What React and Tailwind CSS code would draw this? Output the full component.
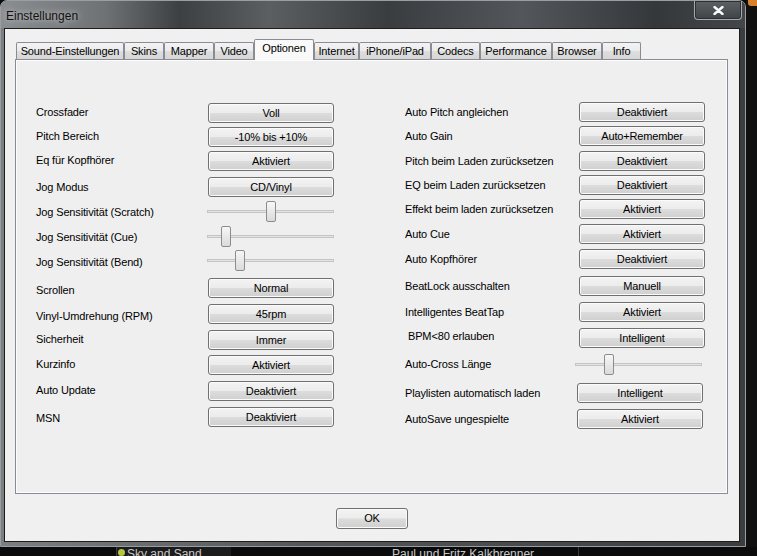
import React from "react";

const tabs = [
  { name: "Sound-Einstellungen", w: "w-[108px]" },
  { name: "Skins", w: "w-[40px]" },
  { name: "Mapper", w: "w-[50px]" },
  { name: "Video", w: "w-[40px]" },
  { name: "Optionen", w: "w-[60px]", active: true },
  { name: "Internet", w: "w-[45px]" },
  { name: "iPhone/iPad", w: "w-[72px]" },
  { name: "Codecs", w: "w-[49px]" },
  { name: "Performance", w: "w-[72px]" },
  { name: "Browser", w: "w-[50px]" },
  { name: "Info", w: "w-[39px]" },
];

const leftRows = [
  { label: "Crossfader", value: "Voll", mt: "mt-[43px]", nudge: "-translate-y-[1px]" },
  { label: "Pitch Bereich", value: "-10% bis +10%", mt: "mt-[4px]", nudge: "-translate-y-[1px]" },
  { label: "Eq für Kopfhörer", value: "Aktiviert", mt: "mt-[4px]", nudge: "-translate-y-[1px]" },
  { label: "Jog Modus", value: "CD/Vinyl", mt: "mt-[6px]", nudge: "" },
  { label: "Jog Sensitivität (Scratch)", slider: 59, mt: "mt-[4px]", nudge: "translate-y-[1px]" },
  { label: "Jog Sensitivität (Cue)", slider: 14, mt: "mt-[4px]", nudge: "translate-y-[1px]" },
  { label: "Jog Sensitivität (Bend)", slider: 28, mt: "mt-[3px]", nudge: "translate-y-[2px]" },
  { label: "Scrollen", value: "Normal", mt: "mt-[7px]", nudge: "translate-y-[2px]" },
  { label: "Vinyl-Umdrehung (RPM)", value: "45rpm", mt: "mt-[6px]", nudge: "translate-y-[2px]" },
  { label: "Sicherheit", value: "Immer", mt: "mt-[6px]", nudge: "-translate-y-[1px]" },
  { label: "Kurzinfo", value: "Aktiviert", mt: "mt-[5px]", nudge: "-translate-y-[1px]" },
  { label: "Auto Update", value: "Deaktiviert", mt: "mt-[6px]", nudge: "-translate-y-[1px]" },
  { label: "MSN", value: "Deaktiviert", mt: "mt-[6px]", nudge: "translate-y-[1px]" },
];

const rightRows = [
  { label: "Auto Pitch angleichen", value: "Deaktiviert", mt: "mt-[42px]", nudge: "" },
  { label: "Auto Gain", value: "Auto+Remember", mt: "mt-[4px]", nudge: "" },
  { label: "Pitch beim Laden zurücksetzen", value: "Deaktiviert", mt: "mt-[5px]", nudge: "" },
  { label: "EQ beim Laden zurücksetzen", value: "Deaktiviert", mt: "mt-[4px]", nudge: "" },
  { label: "Effekt beim laden zurücksetzen", value: "Aktiviert", mt: "mt-[4px]", nudge: "" },
  { label: "Auto Cue", value: "Aktiviert", mt: "mt-[5px]", nudge: "" },
  { label: "Auto Kopfhörer", value: "Deaktiviert", mt: "mt-[5px]", nudge: "" },
  { label: "BeatLock ausschalten", value: "Manuell", mt: "mt-[7px]", nudge: "" },
  { label: "Intelligentes BeatTap", value: "Aktiviert", mt: "mt-[6px]", nudge: "" },
  { label: "BPM<80 erlauben", value: "Intelligent", mt: "mt-[6px]", nudge: "-translate-y-[2px] pl-[3px]" },
  { label: "Auto-Cross Länge", slider: 29, mt: "mt-[6px]", nudge: "", shift: "-ml-[4px]" },
  { label: "Playlisten automatisch laden", value: "Intelligent", mt: "mt-[8px]", nudge: "", shift: "-ml-[2px]" },
  { label: "AutoSave ungespielte", value: "Aktiviert", mt: "mt-[6px]", nudge: "", shift: "-ml-[2px]" },
];

const WinButton = ({ children, w = "w-[126px]", h = "h-[20px]" }) => (
  <div
    className={`${w} ${h} flex items-center justify-center rounded-[3px] border border-[#707070] bg-[linear-gradient(#f3f3f3_0%,#ececec_48%,#dcdcdc_52%,#cfcfcf_100%)] shadow-[inset_0_0_0_1px_#fbfbfb] text-black`}
  >
    {children}
  </div>
);

const Slider = ({ pos, shift = "-ml-[1px]" }) => (
  <div className={`relative h-[21px] w-[127px] ${shift}`}>
    <div className="absolute left-0 right-0 top-[9px] h-[3px] border border-[#c4c4c4] bg-[#e4e4e4]" />
    <div
      className="absolute top-0 h-[21px] w-[10px] rounded-[2px] border border-[#8c8c8c] bg-[linear-gradient(#f7f7f7,#dadada)]"
      style={{ left: pos }}
    />
  </div>
);

const Row = ({ row, labelW }) => (
  <div className={`flex items-center ${row.slider !== undefined ? "h-[21px]" : "h-[20px]"} ${row.mt}`}>
    <div className={`${labelW} whitespace-nowrap ${row.nudge}`}>{row.label}</div>
    {row.slider !== undefined ? (
      <Slider pos={row.slider} shift={row.shift} />
    ) : (
      <div className={row.shift || ""}>
        <WinButton>{row.value}</WinButton>
      </div>
    )}
  </div>
);

export default function App() {
  return (
    <div className="w-[757px] h-[556px] overflow-hidden bg-[#0b0b0b] font-['Liberation_Sans',Arial,sans-serif] text-[11px] tracking-[-0.15px] text-black">
      <div className="flex h-[547px]">
        {/* window frame */}
        <div className="flex w-[746px] h-[547px] flex-col rounded-t-[7px] border border-[#9a9ea2] bg-[linear-gradient(90deg,#7c7f82_0%,#55585b_40%,#3a3d40_100%)]">
          {/* title bar */}
          <div className="flex h-[27px] items-start bg-[linear-gradient(90deg,#8b8e91_0%,#6f7275_14%,#3d4043_24%,#5c5f62_36%,#3a3d40_52%,#53565a_70%,#35383b_88%,#44474a_100%)] rounded-t-[6px]">
            <div className="pl-[5px] pt-[6px] text-[12px] tracking-normal text-[#111] [text-shadow:0_0_6px_rgba(230,230,230,0.9)]">
              Einstellungen
            </div>
            <div className="flex-1" />
            <div className="mr-[3px] flex h-[19px] w-[48px] items-center justify-center rounded-b-[4px] border border-t-0 border-[#a6aaae] bg-[linear-gradient(#5d6164,#3f4346)] shadow-[inset_0_0_0_1px_#2c2f32]">
              <svg width="11" height="9" viewBox="0 0 11 9">
                <path d="M1.5 1 L9.5 8 M9.5 1 L1.5 8" stroke="#fafafa" strokeWidth="2.4" strokeLinecap="round" />
              </svg>
            </div>
          </div>
          {/* client area */}
          <div className="ml-[3px] w-[736px] h-[514px] border border-[#1c1c1c] bg-[#f0f0f0]">
            <div className="ml-[10px] mt-[10px] w-[713px]">
              {/* tabs */}
              <div className="flex h-[20px] items-end pl-[1px]">
                {tabs.map((t) =>
                  t.active ? (
                    <div
                      key={t.name}
                      className={`${t.w} relative z-10 -mb-[1px] flex h-[21px] items-center justify-center rounded-t-[2px] border border-b-0 border-[#898c95] bg-[#f9f9f9] pb-[3px] text-black`}
                    >
                      {t.name}
                    </div>
                  ) : (
                    <div
                      key={t.name}
                      className={`${t.w} flex h-[17px] items-center justify-center rounded-t-[2px] border border-b-0 border-[#898c95] bg-[linear-gradient(#f3f3f3_0%,#ebebeb_50%,#dedede_51%,#d6d6d6_100%)] pt-[1px] text-black`}
                    >
                      {t.name}
                    </div>
                  )
                )}
              </div>
              {/* panel */}
              <div className="flex h-[435px] border border-[#898c95] bg-[#efefef] shadow-[inset_1px_1px_0_#fdfdfd,inset_-1px_-1px_0_#fdfdfd] pl-[20px]">
                <div className="flex w-[369px] flex-col">
                  {leftRows.map((r) => (
                    <Row key={r.label} row={r} labelW="w-[172px]" />
                  ))}
                </div>
                <div className="flex flex-col">
                  {rightRows.map((r) => (
                    <Row key={r.label} row={r} labelW="w-[174px]" />
                  ))}
                </div>
              </div>
            </div>
            {/* OK */}
            <div className="mt-[14px] flex justify-center">
              <WinButton w="w-[72px]" h="h-[21px]">OK</WinButton>
            </div>
          </div>
        </div>
        {/* background strip on the right */}
        <div className="flex flex-1 flex-col bg-[#101010]">
          <div className="ml-[2px] h-[6px] w-[9px] rounded-bl-[3px] bg-[#d9822b]" />
        </div>
      </div>
      {/* background app peeking out at the bottom */}
      <div className="flex h-[9px] items-start overflow-hidden bg-[#0b0b0b] text-[12px] leading-[14px] tracking-normal text-[#c8c8c8]">
        <div className="ml-[116px] flex h-[9px] w-[115px] items-start border-l border-[#3a3a3a] bg-[#1c1c1c]">
          <div className="ml-[1px] mt-[2px] h-[7px] w-[7px] rounded-full bg-[#b5c640]" />
          <span className="ml-[2px]">Sky and Sand</span>
        </div>
        <div className="ml-[157px] flex h-[9px] w-[180px] items-start">
          <span className="ml-[4px]">Paul und Fritz Kalkbrenner</span>
        </div>
        <div className="ml-[10px] h-[9px] border-l border-[#3a3a3a]" />
      </div>
    </div>
  );
}
